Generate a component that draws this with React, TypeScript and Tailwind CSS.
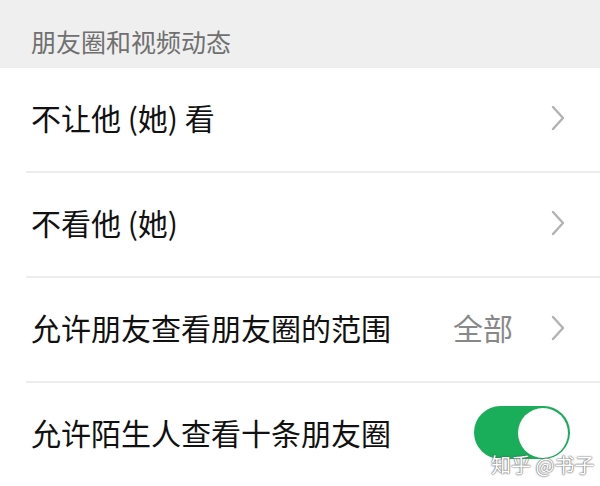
import * as React from "react"

const font = { fontFamily: '"Noto Sans CJK SC", "Noto Sans", sans-serif' }

function Chevron() {
  return (
    <svg width="16" height="26" viewBox="0 0 16 26" fill="none" className="shrink-0">
      <path d="M3 2 L13 13 L3 24" stroke="#b2b2b2" strokeWidth="2.4" strokeLinecap="round" strokeLinejoin="round" />
    </svg>
  )
}

function Row({ label, value, last, children }: { label: string; value?: string; last?: boolean; children?: React.ReactNode }) {
  return (
    <div className="relative flex h-[105px] items-center pb-[6px] pl-[31px] pr-[34px]">
      <span className="flex-1 text-[30px] text-[#111111]">{label}</span>
      {value ? <span className="mr-[37px] text-[30px] text-[#888888]">{value}</span> : null}
      {children ?? <Chevron />}
      {!last ? <div className="absolute bottom-0 left-[26px] right-0 h-[2px] bg-[#ededed]" /> : null}
    </div>
  )
}

function Toggle() {
  return (
    <div className="-mr-[4px] flex h-[53px] w-[96px] items-center justify-end rounded-full bg-[#1aad5a] pr-[2px]">
      <div className="size-[50px] rounded-full bg-white" />
    </div>
  )
}

export default function App() {
  return (
    <div className="relative h-[486px] w-[600px] overflow-hidden bg-white" style={font}>
      <div className="flex h-[68px] items-end bg-[#efefef] pb-[8px] pl-[31px]">
        <span className="text-[25px] text-[#707070]">朋友圈和视频动态</span>
      </div>
      <Row label="不让他 (她) 看" />
      <Row label="不看他 (她)" />
      <Row label="允许朋友查看朋友圈的范围" value="全部" />
      <Row label="允许陌生人查看十条朋友圈" last>
        <Toggle />
      </Row>
      <div className="absolute left-[491px] top-[450px] text-[20px] text-white [text-shadow:0_0_2px_#555,0_0_1px_#555]">
        知乎 @书子
      </div>
    </div>
  )
}
